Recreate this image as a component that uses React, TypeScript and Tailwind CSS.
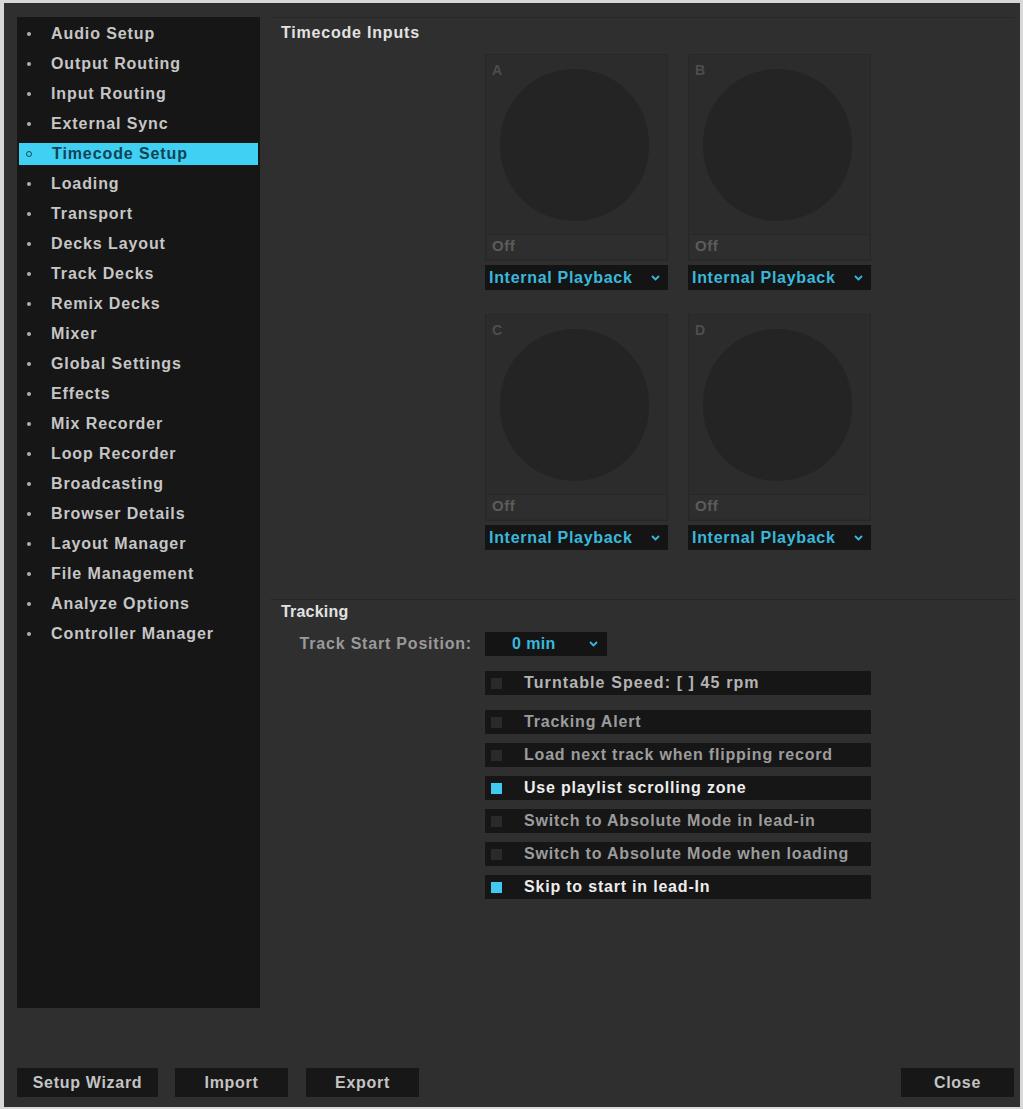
import React from 'react'

const font = { fontFamily: '"Liberation Sans", Arial, sans-serif' }

const navItems = [
  'Audio Setup', 'Output Routing', 'Input Routing', 'External Sync', 'Timecode Setup',
  'Loading', 'Transport', 'Decks Layout', 'Track Decks', 'Remix Decks', 'Mixer',
  'Global Settings', 'Effects', 'Mix Recorder', 'Loop Recorder', 'Broadcasting',
  'Browser Details', 'Layout Manager', 'File Management', 'Analyze Options', 'Controller Manager',
]

const options = [
  { label: 'Tracking Alert', on: false },
  { label: 'Load next track when flipping record', on: false },
  { label: 'Use playlist scrolling zone', on: true },
  { label: 'Switch to Absolute Mode in lead-in', on: false },
  { label: 'Switch to Absolute Mode when loading', on: false },
  { label: 'Skip to start in lead-In', on: true },
]

function Chevron() {
  return (
    <svg width="9" height="6" viewBox="0 0 9 6" fill="none">
      <path d="M1 1l3.5 3.5L8 1" stroke="#3ab8dc" strokeWidth="1.8" />
    </svg>
  )
}

function Deck({ name }: { name: string }) {
  return (
    <div>
      <div className="relative h-[207px] border border-[#272727] bg-[#2c2c2c] flex flex-col">
        <span className="absolute left-[6px] top-[5px] text-[14px] font-bold text-[#4e4e4e]">{name}</span>
        <div className="flex-1 flex items-start justify-center pt-[14px] pr-[4px]">
          <div className="w-[149px] h-[152px] rounded-full bg-[#242424]" />
        </div>
        <div className="h-[24px] mb-[2px] mx-[1px] border-t border-[#272727] bg-[#2e2e2e] flex items-center px-[5px] text-[15px] font-bold tracking-[0.5px] text-[#5c5c5c]">
          Off
        </div>
      </div>
      <div className="mt-[4px] h-[25px] bg-[#141414] flex items-center justify-between pl-[4px] pr-[8px]">
        <span className="text-[16px] font-bold tracking-[0.7px] text-[#3ab8dc]">Internal Playback</span>
        <Chevron />
      </div>
    </div>
  )
}

function Option({ label, on }: { label: string; on: boolean }) {
  return (
    <div className="w-[386px] h-[24px] bg-[#161616] flex items-center">
      <div className={`ml-[6px] w-[11px] h-[11px] ${on ? 'bg-[#42c9ef]' : 'bg-[#2a2a2a]'}`} />
      <span className={`ml-[22px] text-[16px] font-bold tracking-[0.8px] ${on ? 'text-[#ededed]' : 'text-[#9c9c9c]'}`}>{label}</span>
    </div>
  )
}

function Btn({ label, w }: { label: string; w: string }) {
  return (
    <button className={`${w} h-[29px] bg-[#171717] text-[16px] font-bold tracking-[0.7px] text-[#c4c4c4]`}>{label}</button>
  )
}

export default function App() {
  return (
    <div className="w-[1023px] h-[1109px] bg-[#d8d8d8] pt-[3px] pl-[4px]" style={font}>
      <div className="w-[1016px] h-[1104px] bg-[#2f2f2f] flex flex-col">
        <div className="flex pt-[14px] pl-[13px]">
          {/* sidebar */}
          <div className="w-[243px] h-[991px] bg-[#161616] pt-[2px]">
            {navItems.map(item => {
              const active = item === 'Timecode Setup'
              return (
                <div key={item} className="h-[30px] flex items-center">
                  <div className={`h-[22px] w-full mx-[2px] flex items-center ${active ? 'bg-[#3fd0f4]' : ''}`}>
                    {active ? (
                      <span className="ml-[7px] w-[6px] h-[6px] rounded-full border-[1.5px] border-[#104a5c]" />
                    ) : (
                      <span className="ml-[8px] w-[4px] h-[4px] rounded-full bg-[#b0b0b0]" />
                    )}
                    <span className={`ml-[20px] text-[16px] font-bold tracking-[0.9px] ${active ? 'text-[#0f4454]' : 'text-[#c6c6c6]'}`}>
                      {item}
                    </span>
                  </div>
                </div>
              )
            })}
          </div>

          {/* main */}
          <div className="flex-1 ml-[10px] mr-[5px] border-t border-[#282828]">
            <div className="pl-[11px] pt-[5px] h-[20px] text-[16px] font-bold tracking-[0.8px] text-[#e2e2e2] leading-[20px] box-content">Timecode Inputs</div>
            <div className="ml-[215px] mt-[11px] grid grid-cols-[183px_183px] gap-x-[20px] gap-y-[24px]">
              <Deck name="A" />
              <Deck name="B" />
              <Deck name="C" />
              <Deck name="D" />
            </div>

            <div className="mt-[49px] border-t border-[#272727]">
              <div className="pl-[11px] pt-[2px] h-[20px] leading-[20px] text-[16px] font-bold tracking-[0.2px] text-[#e2e2e2] box-content">Tracking</div>
              <div className="mt-[10px] flex items-center">
                <div className="w-[202px] text-right text-[16px] font-bold tracking-[0.8px] text-[#9a9a9a]">Track Start Position:</div>
                <div className="ml-[13px] w-[122px] h-[24px] bg-[#141414] flex items-center justify-between pl-[27px] pr-[9px]">
                  <span className="text-[16px] font-bold tracking-[0.4px] text-[#3ab8dc]">0 min</span>
                  <Chevron />
                </div>
              </div>
              <div className="ml-[215px] mt-[15px]">
                <div className="w-[386px] h-[24px] bg-[#161616] flex items-center">
                  <div className="ml-[6px] w-[11px] h-[11px] bg-[#2a2a2a]" />
                  <span className="ml-[22px] text-[16px] font-bold tracking-[1.1px] text-[#b4b4b4]">Turntable Speed: [ ] 45 rpm</span>
                </div>
                <div className="mt-[15px] flex flex-col gap-[9px]">
                  {options.map(o => <Option key={o.label} label={o.label} on={o.on} />)}
                </div>
              </div>
            </div>
          </div>
        </div>

        {/* footer buttons */}
        <div className="mt-[60px] flex pl-[13px] pr-[6px]">
          <Btn label="Setup Wizard" w="w-[141px]" />
          <div className="ml-[17px]"><Btn label="Import" w="w-[113px]" /></div>
          <div className="ml-[18px]"><Btn label="Export" w="w-[113px]" /></div>
          <div className="ml-auto"><Btn label="Close" w="w-[113px]" /></div>
        </div>
      </div>
    </div>
  )
}
